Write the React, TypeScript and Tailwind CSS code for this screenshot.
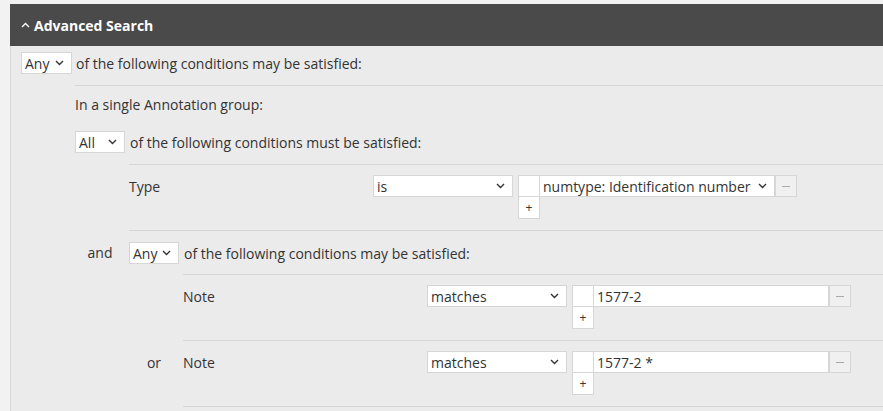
import React from "react";

const font = { fontFamily: '"Open Sans", "Liberation Sans", sans-serif' };

function Chevron({ up = false, className = "" }: { up?: boolean; className?: string }) {
    return (
        <svg width="9" height="6" viewBox="0 0 9 6" className={className}>
            <polyline
                points={up ? "1,5 4.5,1.5 8,5" : "1,1 4.5,4.5 8,1"}
                fill="none"
                stroke="currentColor"
                strokeWidth="1.4"
            />
        </svg>
    );
}

function Select({ value, width }: { value: string; width: string }) {
    return (
        <div className={`${width} h-[22px] bg-white border border-[#d6d6d6] flex items-center justify-between pl-[3px] pr-[7px] text-[#333] shrink-0`}>
            <span>{value}</span>
            <Chevron />
        </div>
    );
}

function ValueBox({ children }: { children: React.ReactNode }) {
    return (
        <div className="flex flex-col ml-[5px]">
            <div className="flex">
                <div className="w-[22px] h-[22px] bg-white border border-[#d6d6d6]" />
                {children}
                <div className="w-[22px] h-[22px] bg-[#f0f0f0] border border-[#d6d6d6] flex items-center justify-center">
                    <div className="w-[8px] h-[1px] bg-[#aaa]" />
                </div>
            </div>
            <div className="w-[22px] h-[22px] bg-white border border-t-0 border-[#d6d6d6] flex items-center justify-center text-[12px] text-[#333]">
                +
            </div>
        </div>
    );
}

function Condition({ label, op, value, isSelect }: { label: string; op: string; value: string; isSelect?: boolean }) {
    return (
        <div className="flex items-start pt-[10px] pb-[11px]">
            <div className="w-[244px] h-[22px] flex items-center shrink-0">{label}</div>
            <Select value={op} width="w-[140px]" />
            <ValueBox>
                {isSelect ? (
                    <div className="w-[235px] h-[22px] bg-white border border-l-0 border-[#d6d6d6] flex items-center justify-between pl-[3px] pr-[7px]">
                        <span>{value}</span>
                        <Chevron />
                    </div>
                ) : (
                    <div className="w-[235px] h-[22px] bg-white border border-l-0 border-[#d6d6d6] flex items-center pl-[3px]">
                        {value}
                    </div>
                )}
            </ValueBox>
        </div>
    );
}

function Child({ connector, children }: { connector?: string; children: React.ReactNode }) {
    return (
        <div className="flex">
            <div className="w-[54px] shrink-0 text-center pr-[4px] pt-[12px] leading-[22px]">
                {connector}
            </div>
            <div className="flex-1 border-t border-[#d6d6d6]">{children}</div>
        </div>
    );
}

export default function App() {
    return (
        <div className="min-h-screen bg-[#f2f2f2] pt-[4px] pl-[10px] text-[14px] text-[#333]" style={font}>
            <div className="h-[42px] bg-[#4a4a4a] flex items-center pl-[11px] text-white font-bold gap-[4px]">
                <Chevron up />
                <span>Advanced Search</span>
            </div>
            <div className="bg-[#ebebeb] border-l border-[#d8d8d8] pl-[10px] pt-[6px] min-h-[365px]">
                {/* top level group */}
                <div className="flex items-center gap-[4px] pb-[11px]">
                    <Select value="Any" width="w-[51px]" />
                    <span>of the following conditions may be satisfied:</span>
                </div>
                <div className="flex">
                    <div className="w-[54px] shrink-0" />
                    <div className="flex-1 border-t border-[#d6d6d6]">
                        <div className="pt-[8px] h-[32px] leading-[22px]">In a single Annotation group:</div>
                        <div className="flex items-center gap-[5px] pt-[13px] pb-[11px]">
                            <Select value="All" width="w-[50px]" />
                            <span>of the following conditions must be satisfied:</span>
                        </div>
                        <div className="flex flex-col">
                            <Child>
                                <Condition label="Type" op="is" value="numtype: Identification number" isSelect />
                            </Child>
                            <Child connector="and">
                                <div className="flex items-center gap-[5px] pt-[11px] pb-[10px]">
                                    <Select value="Any" width="w-[50px]" />
                                    <span>of the following conditions may be satisfied:</span>
                                </div>
                                <Child>
                                    <Condition label="Note" op="matches" value="1577-2" />
                                </Child>
                                <Child connector="or">
                                    <Condition label="Note" op="matches" value="1577-2 *" />
                                </Child>
                                <div className="ml-[54px] border-t border-[#d6d6d6] h-[6px]" />
                            </Child>
                        </div>
                    </div>
                </div>
            </div>
        </div>
    );
}
